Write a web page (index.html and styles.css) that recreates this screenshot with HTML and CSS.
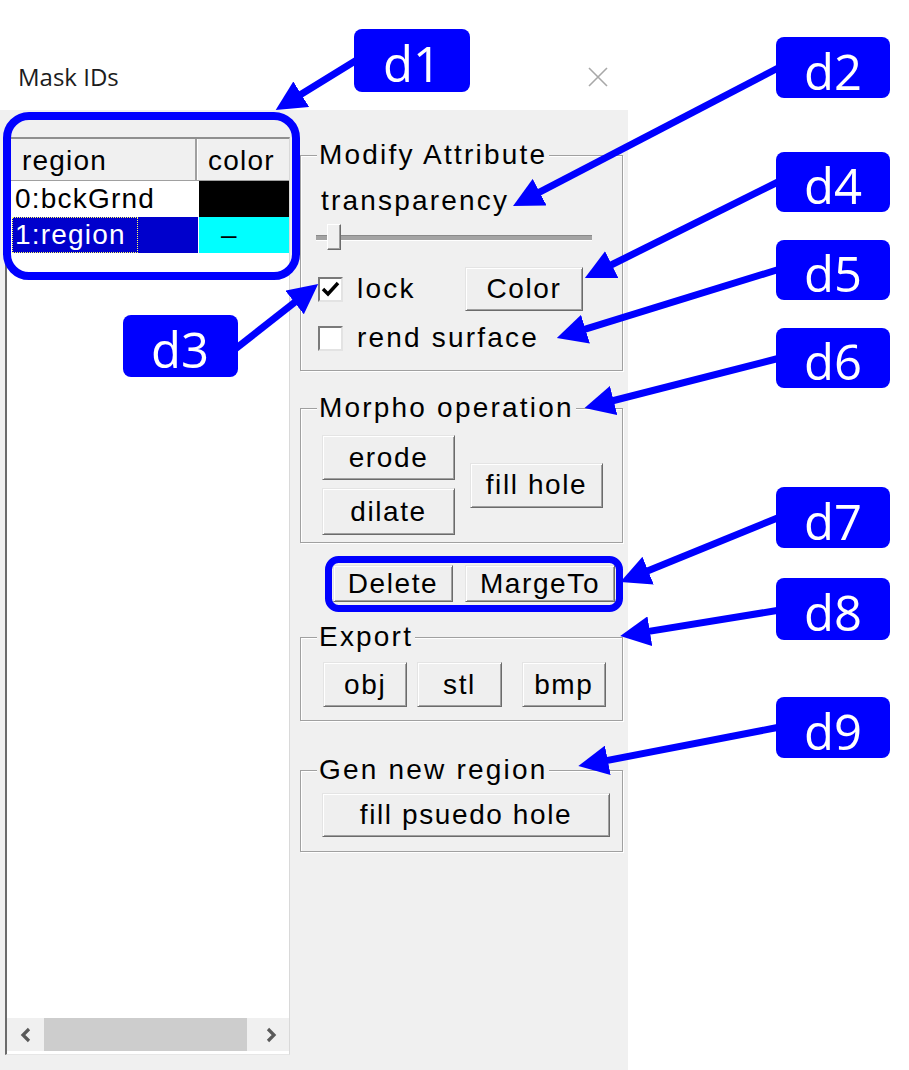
FILE: index.html
```html
<!DOCTYPE html>
<html lang="en">
<head>
<meta charset="utf-8">
<title>Mask IDs</title>
<link rel="stylesheet" href="styles.css">
</head>
<body>
<div class="window">
  <header class="titlebar">
    <span class="title">Mask IDs</span>
    <span class="close">
      <svg width="22" height="22" viewBox="0 0 22 22"><path d="M2 2 L20 20 M20 2 L2 20" stroke="#a8a8a8" stroke-width="1.6" fill="none"/></svg>
    </span>
  </header>
  <main class="panel">
    <section class="listpane">
      <div class="lv-header">
        <div class="lv-h lv-h-region">region</div>
        <div class="lv-h lv-h-color">color</div>
      </div>
      <div class="lv-row">
        <div class="lv-name">0:bckGrnd</div>
        <div class="lv-swatch swatch-black"></div>
      </div>
      <div class="lv-row selected">
        <div class="lv-name"><span class="focus">1:region</span></div>
        <div class="lv-swatch swatch-cyan">–</div>
      </div>
      <div class="lv-fill"></div>
      <div class="hscroll">
        <div class="hs-btn">
          <svg width="12" height="16" viewBox="0 0 12 16"><polyline points="9,2 3,8 9,14" fill="none" stroke="#5a5a5a" stroke-width="3.2"/></svg>
        </div>
        <div class="hs-track"><div class="hs-thumb"></div></div>
        <div class="hs-btn">
          <svg width="12" height="16" viewBox="0 0 12 16"><polyline points="3,2 9,8 3,14" fill="none" stroke="#5a5a5a" stroke-width="3.2"/></svg>
        </div>
      </div>
    </section>

    <section class="controls">
      <fieldset class="group g-modify">
        <legend>Modify Attribute</legend>
        <div class="field-label">transparency</div>
        <div class="slider"><div class="slider-thumb"></div></div>
        <div class="check-row row-lock">
          <label class="check">
            <span class="cb"><svg width="21" height="21" viewBox="0 0 21 21"><path d="M3 10 L8 15 L18 4" fill="none" stroke="#000" stroke-width="3.4"/></svg></span>
            <span>lock</span>
          </label>
          <button class="btn b-color">Color</button>
        </div>
        <div class="check-row row-rend">
          <label class="check">
            <span class="cb"></span>
            <span>rend surface</span>
          </label>
        </div>
      </fieldset>

      <fieldset class="group g-morpho">
        <legend>Morpho operation</legend>
        <div class="morpho-body">
          <div class="btn-col">
            <button class="btn b-erode">erode</button>
            <button class="btn b-dilate">dilate</button>
          </div>
          <button class="btn b-fill">fill hole</button>
        </div>
      </fieldset>

      <div class="action-row">
        <button class="btn b-delete">Delete</button>
        <button class="btn b-marge">MargeTo</button>
      </div>

      <fieldset class="group g-export">
        <legend>Export</legend>
        <div class="export-body">
          <button class="btn b-exp">obj</button>
          <button class="btn b-exp b-stl">stl</button>
          <button class="btn b-exp b-bmp">bmp</button>
        </div>
      </fieldset>

      <fieldset class="group g-gen">
        <legend>Gen new region</legend>
        <button class="btn b-pseudo">fill psuedo hole</button>
      </fieldset>
    </section>
  </main>
</div>

<svg class="annot" width="909" height="1070" viewBox="0 0 909 1070">
  <defs>
    <marker id="ah" markerUnits="userSpaceOnUse" markerWidth="30" markerHeight="30" refX="12" refY="15" orient="auto">
      <path d="M0,0 L30,15 L0,30 Z" fill="#0000ff"/>
    </marker>
  </defs>
  <rect x="7" y="116" width="289" height="160" rx="22" fill="none" stroke="#0000ff" stroke-width="8"/>
  <rect x="328.5" y="559.5" width="291" height="49" rx="10" fill="none" stroke="#0000ff" stroke-width="7"/>
  <g stroke="#0000ff" stroke-width="7" marker-end="url(#ah)">
    <line x1="360" y1="58" x2="291" y2="100.5"/>
    <line x1="780" y1="67" x2="529" y2="197.7"/>
    <line x1="780" y1="181" x2="601" y2="270"/>
    <line x1="780" y1="269" x2="574" y2="332.7"/>
    <line x1="780" y1="358" x2="602" y2="403.5"/>
    <line x1="780" y1="517" x2="637" y2="575.2"/>
    <line x1="780" y1="610" x2="638" y2="633.1"/>
    <line x1="780" y1="727" x2="596" y2="762.6"/>
    <line x1="234" y1="350" x2="304" y2="295.1"/>
  </g>
  <g fill="#0000ff">
    <rect x="354" y="29" width="116" height="63" rx="8"/>
    <rect x="776" y="37" width="114" height="61" rx="8"/>
    <rect x="776" y="152" width="114" height="60" rx="8"/>
    <rect x="776" y="240" width="114" height="60" rx="8"/>
    <rect x="776" y="328" width="114" height="60" rx="8"/>
    <rect x="776" y="487" width="114" height="61" rx="8"/>
    <rect x="776" y="578" width="114" height="62" rx="8"/>
    <rect x="776" y="697" width="114" height="61" rx="8"/>
    <rect x="123" y="315" width="115" height="62" rx="8"/>
  </g>
  <g class="annot-text" fill="#ffffff" text-anchor="middle">
    <text x="412" y="82">d1</text>
    <text x="833" y="90">d2</text>
    <text x="833" y="204">d4</text>
    <text x="833" y="292">d5</text>
    <text x="833" y="380">d6</text>
    <text x="833" y="540">d7</text>
    <text x="833" y="631">d8</text>
    <text x="833" y="750">d9</text>
    <text x="180" y="368">d3</text>
  </g>
</svg>
</body>
</html>
```

FILE: styles.css
```css
* { box-sizing: border-box; }

html, body {
  margin: 0;
  padding: 0;
  background: #ffffff;
}

body {
  position: relative;
  width: 909px;
  height: 1070px;
  overflow: hidden;
  font-family: "Liberation Sans", Arial, sans-serif;
  color: #000;
}

.window {
  width: 628px;
}

/* title area */
.titlebar {
  height: 110px;
  display: flex;
  justify-content: space-between;
  align-items: flex-start;
  padding: 62px 19px 0 18px;
}

.title {
  font-family: "Open Sans", "Noto Sans", sans-serif;
  font-size: 24px;
  line-height: 30px;
  height: 30px;
  color: #1c1c1c;
}

.close {
  width: 22px;
  height: 30px;
  display: flex;
  align-items: center;
}

/* main gray panel */
.panel {
  display: flex;
  height: 960px;
  background: #f0f0f0;
}

/* list view */
.listpane {
  margin: 27px 0 15px 5px;
  width: 285px;
  display: flex;
  flex-direction: column;
  background: #ffffff;
  border-left: 2px solid #6b6b6b;
  border-top: 2px solid #8f8f8f;
  border-right: 1px solid #d9d9d9;
  border-bottom: 1px solid #e6e6e6;
  font-size: 28px;
  letter-spacing: 1.2px;
}

.lv-header {
  display: flex;
  height: 42px;
  background: #f0f0f0;
  border-bottom: 1px solid #a0a0a0;
}

.lv-h {
  padding-top: 3px;
  line-height: 38px;
}

.lv-h-region {
  width: 190px;
  padding-left: 15px;
  border-right: 2px solid #a0a0a0;
  box-shadow: 1px 0 0 #ffffff;
}

.lv-h-color {
  flex: 1;
  padding-left: 11px;
}

.lv-row {
  display: flex;
  height: 36px;
  line-height: 36px;
}

.lv-name {
  width: 186px;
  margin-left: 5px;
  padding-left: 3px;
  white-space: nowrap;
}

.lv-swatch {
  width: 90px;
  margin-left: 1px;
}

.selected .lv-name {
  background: #0000cc;
  color: #ffffff;
  padding-left: 0;
}

.focus {
  display: inline-block;
  height: 36px;
  padding: 0 12px 0 3px;
  outline: 1px dotted #ffff66;
  outline-offset: -1px;
}

.swatch-black { background: #000000; }

.swatch-cyan {
  background: #00ffff;
  padding-left: 22px;
  color: #000;
}

.lv-fill { flex: 1; }

.hscroll {
  display: flex;
  height: 33px;
  margin-bottom: 3px;
  background: #f0f0f0;
}

.hs-btn {
  width: 37px;
  display: flex;
  align-items: center;
  justify-content: center;
}

.hs-track { flex: 1; }

.hs-thumb {
  width: 203px;
  height: 100%;
  background: #cdcdcd;
}

/* controls column */
.controls {
  margin-left: 10px;
  width: 323px;
  padding-top: 29px;
  display: flex;
  flex-direction: column;
  font-size: 28px;
  letter-spacing: 2.2px;
}

.group {
  margin: 0;
  padding: 0 16px;
  min-width: 0;
  border: 1px solid #a0a0a0;
  box-shadow: inset 1px 1px 0 #ffffff, 1px 1px 0 #ffffff;
}

.group legend {
  padding: 0 2px;
  line-height: 32px;
  background: #f0f0f0;
}

.g-modify { padding-bottom: 12px; }

.field-label {
  margin: 14px 0 0 4px;
  height: 32px;
  line-height: 32px;
}

.slider {
  position: relative;
  display: flex;
  margin: 7px 0 0 -1px;
  width: 276px;
  height: 26px;
}

.slider::before {
  content: "";
  position: absolute;
  left: 0;
  right: 0;
  top: 11px;
  height: 4px;
  background: #a3a3a3;
  border-top: 1px solid #8a8a8a;
  border-bottom: 1px solid #ffffff;
}

.slider-thumb {
  position: relative;
  margin-left: 11px;
  width: 14px;
  height: 26px;
  background: #f0f0f0;
  border: 1px solid;
  border-color: #ffffff #6b6b6b #6b6b6b #ffffff;
  box-shadow: inset -1px -1px 0 #a0a0a0;
}

.check-row {
  display: flex;
  align-items: center;
  justify-content: space-between;
}

.row-lock {
  margin-top: 17px;
  height: 44px;
  padding-right: 23px;
}

.row-rend {
  margin-top: 7px;
  height: 40px;
}

.check {
  display: flex;
  align-items: center;
  gap: 14px;
  margin-left: 1px;
}

.cb {
  width: 25px;
  height: 25px;
  background: #ffffff;
  border: 2px solid;
  border-color: #7a7a7a #e3e3e3 #e3e3e3 #7a7a7a;
  display: flex;
  align-items: center;
  justify-content: center;
}

.btn {
  display: flex;
  align-items: center;
  justify-content: center;
  padding: 0;
  margin: 0;
  background: #efefef;
  border: 1px solid;
  border-color: #e4e4e4 #6b6b6b #6b6b6b #e4e4e4;
  box-shadow: inset 1px 1px 0 #ffffff, inset -1px -1px 0 #a0a0a0;
  font: inherit;
  letter-spacing: 1.6px;
  color: #000;
}

.b-color { width: 118px; height: 44px; }

.g-morpho {
  margin-top: 21px;
  padding-bottom: 7px;
}

.morpho-body {
  display: flex;
  align-items: center;
  gap: 15px;
  margin: 11px 0 0 5px;
}

.btn-col {
  display: flex;
  flex-direction: column;
  gap: 8px;
}

.b-erode { width: 133px; height: 45px; }
.b-dilate { width: 133px; height: 47px; }
.b-fill { width: 133px; height: 45px; }

.action-row {
  display: flex;
  gap: 12px;
  margin-top: 22px;
  padding-left: 33px;
  height: 37px;
}

.b-delete { width: 120px; height: 37px; }
.b-marge { width: 150px; height: 37px; }

.g-export {
  margin-top: 19px;
  padding-bottom: 13px;
}

.export-body {
  display: flex;
  margin: 9px 0 0 6px;
}

.b-exp { width: 85px; height: 45px; }
.b-stl { margin-left: 10px; }
.b-bmp { margin-left: 20px; }

.g-gen {
  margin-top: 33px;
  padding-bottom: 14px;
}

.b-pseudo {
  margin: 7px 0 0 5px;
  width: 288px;
  height: 44px;
}

/* annotation overlay */
.annot {
  position: absolute;
  left: 0;
  top: 0;
  pointer-events: none;
}

.annot-text {
  font-family: "Open Sans", "Noto Sans", sans-serif;
  font-size: 49px;
}
```
